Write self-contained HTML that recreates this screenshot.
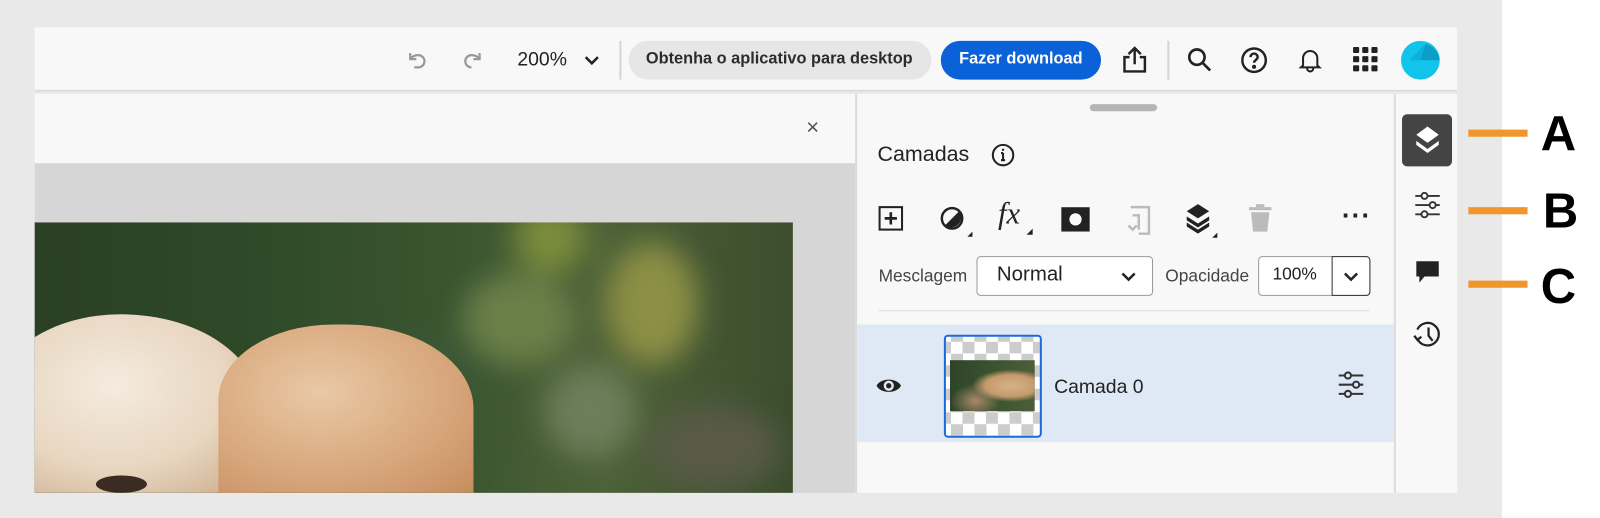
<!DOCTYPE html>
<html><head><meta charset="utf-8"><style>
*{margin:0;padding:0;box-sizing:border-box}
html{width:1600px;height:518px;overflow:hidden}
body{width:1600px;height:518px;background:#fff;font-family:"Liberation Sans",sans-serif;position:relative;overflow:hidden;color:#222}
#w{position:absolute;left:0;top:0;width:1600px;height:518px;overflow:hidden}
#s{position:absolute;left:0;top:0;width:1600px;height:518px;transform:scale(1.0204);transform-origin:0 0}
.abs{position:absolute}
.bg{left:0;top:0;width:1472px;height:518px;background:#e9e9e9}
.top{left:34px;top:27px;width:1394px;height:63px;background:#f8f8f8;border-bottom:2px solid #dcdcdc}
.t{position:absolute;white-space:nowrap}
svg{position:absolute}
</style></head><body><div id="w"><div id="s">
<div class="abs bg"></div>
<div class="abs top"></div>
<svg style="left:396px;top:46px" width="26" height="26" viewBox="0 0 26 26" fill="none" stroke="#999" stroke-width="2.2"><path d="M6 6v6h6M6 12c2-3 5-4 8-4a6 6 0 010 12h-4"/></svg>
<svg style="left:450px;top:46px" width="26" height="26" viewBox="0 0 26 26" fill="none" stroke="#999" stroke-width="2.2"><path d="M20 6v6h-6M20 12c-2-3-5-4-8-4a6 6 0 000 12h-2"/></svg>
<div class="t" style="left:507px;top:48px;font-size:19px;color:#222">200%</div>
<svg style="left:571px;top:52px" width="18" height="14" viewBox="0 0 18 14" fill="none" stroke="#222" stroke-width="2.5"><path d="M3 4l6 6 6-6"/></svg>
<div class="abs" style="left:607px;top:40px;width:2px;height:38px;background:#d5d5d5"></div>
<div class="abs" style="left:616px;top:40px;width:297px;height:38px;border-radius:19px;background:#e6e6e6"></div>
<div class="t" style="left:633px;top:49px;font-size:16px;font-weight:bold;color:#2c2c2c">Obtenha o aplicativo para desktop</div>
<div class="abs" style="left:922px;top:40px;width:157px;height:38px;border-radius:19px;background:#0b61d8"></div>
<div class="t" style="left:940px;top:49px;font-size:16px;font-weight:bold;color:#fff">Fazer download</div>
<svg style="left:1098px;top:44px" width="28" height="30" viewBox="0 0 28 30" fill="none" stroke="#222" stroke-width="2.4"><path d="M9 12H4v14h20V12h-5M14 19V3M8 9l6-6 6 6"/></svg>
<div class="abs" style="left:1144px;top:40px;width:2px;height:38px;background:#d5d5d5"></div>
<svg style="left:1162px;top:45px" width="28" height="28" viewBox="0 0 28 28" fill="none" stroke="#222" stroke-width="2.6"><circle cx="11" cy="11" r="7.5"/><path d="M17 17l7 7"/></svg>
<svg style="left:1215px;top:45px" width="28" height="28" viewBox="0 0 28 28" fill="none" stroke="#222" stroke-width="2.4"><circle cx="14" cy="14" r="11.5"/><path d="M10.5 11a3.5 3.5 0 117 0c0 2.5-3.5 3-3.5 5.5"/><circle cx="14" cy="20.5" r="0.8" fill="#222"/></svg>
<svg style="left:1270px;top:45px" width="28" height="28" viewBox="0 0 28 28" fill="none" stroke="#222" stroke-width="2"><path d="M7 19V12a7 7 0 0114 0v7l2 2H5zM11 22a3 3 0 006 0"/></svg>
<svg style="left:1325px;top:45px" width="26" height="26" viewBox="0 0 26 26" fill="#222"><rect x="1" y="1" width="6" height="6" rx="1"/><rect x="10" y="1" width="6" height="6" rx="1"/><rect x="19" y="1" width="6" height="6" rx="1"/><rect x="1" y="10" width="6" height="6" rx="1"/><rect x="10" y="10" width="6" height="6" rx="1"/><rect x="19" y="10" width="6" height="6" rx="1"/><rect x="1" y="19" width="6" height="6" rx="1"/><rect x="10" y="19" width="6" height="6" rx="1"/><rect x="19" y="19" width="6" height="6" rx="1"/></svg>
<svg style="left:1373px;top:40px" width="38" height="38" viewBox="0 0 38 38"><circle cx="19" cy="19" r="19" fill="#12c3ea"/><path d="M19 19L24 3A19 19 0 0138 19z" fill="#0b9ec6"/><path d="M19 19L24 3 8 19z" fill="#0fb0d8"/></svg>

<div class="abs" style="left:34px;top:92px;width:804px;height:68px;background:#f8f8f8"></div>
<div class="t" style="left:790px;top:112px;font-size:22px;color:#555">×</div>
<div class="abs" style="left:34px;top:160px;width:804px;height:323px;background:#d6d6d6"></div>
<div class="abs" style="left:34px;top:218px;width:743px;height:265px;overflow:hidden;background:linear-gradient(90deg,#2a3f24 0%,#2f4a28 30%,#3b5530 55%,#4d6238 75%,#3b4d2e 100%)">
 <div class="abs" style="left:0;top:0;width:743px;height:265px;filter:blur(14px)">
  <div class="abs" style="left:420px;top:50px;width:110px;height:90px;border-radius:50%;background:#6a8049"></div>
  <div class="abs" style="left:560px;top:20px;width:90px;height:120px;border-radius:50%;background:#8c8f45"></div>
  <div class="abs" style="left:470px;top:-20px;width:70px;height:70px;border-radius:50%;background:#7b8c3c"></div>
  <div class="abs" style="left:600px;top:180px;width:130px;height:80px;border-radius:50%;background:#595a47"></div>
  <div class="abs" style="left:320px;top:110px;width:120px;height:140px;border-radius:50%;background:#3b5736"></div>
  <div class="abs" style="left:500px;top:140px;width:90px;height:90px;border-radius:50%;background:#6d7e5a"></div>
 </div>
 <div class="abs" style="left:-40px;top:90px;width:260px;height:175px;border-radius:48% 52% 0 0;background:radial-gradient(ellipse at 45% 40%,#f4ebdf 0%,#e8d6c0 55%,#c9a887 100%)"></div>
 <div class="abs" style="left:180px;top:100px;width:250px;height:165px;border-radius:45% 50% 0 0;background:radial-gradient(ellipse at 40% 40%,#e9c8a6 0%,#d9a97e 55%,#c68d5f 100%)"></div>
 <div class="abs" style="left:60px;top:248px;width:50px;height:17px;border-radius:50%;background:#3a2c22"></div>
</div>

<div class="abs" style="left:838px;top:92px;width:2px;height:391px;background:#dcdcdc"></div>
<div class="abs" style="left:840px;top:92px;width:526px;height:391px;background:#f8f8f8"></div>
<div class="abs" style="left:1068px;top:102px;width:66px;height:7px;border-radius:4px;background:#b5b5b5"></div>
<div class="t" style="left:860px;top:140px;font-size:21px;color:#222">Camadas</div>
<svg style="left:971px;top:140px" width="24" height="24" viewBox="0 0 24 24" fill="none" stroke="#222" stroke-width="2"><circle cx="12" cy="12" r="10"/><path d="M12 10v7M10 17h4M10 10h2" /><circle cx="12" cy="6.8" r="1.2" fill="#222" stroke="none"/></svg>
<svg style="left:860px;top:201px" width="26" height="26" viewBox="0 0 26 26" fill="none" stroke="#222" stroke-width="2"><rect x="2" y="2" width="22" height="22"/><path d="M13 7v12M7 13h12" stroke-width="2.6"/></svg>
<svg style="left:920px;top:201px" width="36" height="32" viewBox="0 0 36 32"><circle cx="13" cy="13" r="10" fill="none" stroke="#222" stroke-width="2.4"/><path d="M20 6A10 10 0 016 20z" fill="#222"/><path d="M33 26v5h-5z" fill="#222"/></svg>
<div class="t" style="left:978px;top:193px;font-size:30px;font-style:italic;font-family:'Liberation Serif',serif;color:#222">fx</div>
<svg style="left:1004px;top:222px" width="10" height="10"><path d="M8 2v6H2z" fill="#222"/></svg>
<svg style="left:1040px;top:203px" width="28" height="24" viewBox="0 0 28 24"><rect width="28" height="24" fill="#222"/><circle cx="14" cy="12" r="6" fill="#f8f8f8"/></svg>
<svg style="left:1100px;top:201px" width="30" height="30" viewBox="0 0 30 30" fill="none" stroke="#bbb" stroke-width="2.4"><path d="M8 2h18v26H16M10 10h6v14M6 20l4 4 4-4"/></svg>
<svg style="left:1160px;top:199px" width="36" height="36" viewBox="0 0 36 36" fill="#222"><path d="M14 1L25 8 14 15 3 8z"/><path d="M3 13l11 7 11-7v4l-11 7-11-7z"/><path d="M3 19l11 7 11-7v4l-11 7-11-7z"/><path d="M33 29v5h-5z"/></svg>
<svg style="left:1222px;top:200px" width="26" height="28" viewBox="0 0 26 28" fill="#bbb"><rect x="2" y="3" width="22" height="3"/><rect x="9" y="0" width="8" height="3"/><path d="M4 8h18l-2 19H6z"/></svg>
<div class="t" style="left:1315px;top:196px;font-size:26px;font-weight:bold;color:#222;letter-spacing:1px">···</div>
<div class="t" style="left:861px;top:261px;font-size:17px;color:#444">Mesclagem</div>
<div class="abs" style="left:957px;top:251px;width:173px;height:39px;border:1.5px solid #999;border-radius:4px;background:#fff"></div>
<div class="t" style="left:977px;top:258px;font-size:20px;color:#222">Normal</div>
<svg style="left:1097px;top:264px" width="18" height="14" viewBox="0 0 18 14" fill="none" stroke="#222" stroke-width="2.5"><path d="M3 4l6 6 6-6"/></svg>
<div class="t" style="left:1142px;top:261px;font-size:17px;color:#444">Opacidade</div>
<div class="abs" style="left:1233px;top:251px;width:110px;height:39px;border:1.5px solid #999;border-radius:4px;background:#fff"></div>
<div class="abs" style="left:1305px;top:251px;width:38px;height:39px;border:1.5px solid #333;border-radius:0 4px 4px 0;background:#fff"></div>
<div class="t" style="left:1247px;top:259px;font-size:17px;color:#222">100%</div>
<svg style="left:1315px;top:264px" width="18" height="14" viewBox="0 0 18 14" fill="none" stroke="#222" stroke-width="2.5"><path d="M3 4l6 6 6-6"/></svg>
<div class="abs" style="left:861px;top:304px;width:481px;height:1px;background:#ddd"></div>
<div class="abs" style="left:840px;top:318px;width:526px;height:115px;background:#dfe8f5"></div>
<svg style="left:858px;top:367px" width="26" height="22" viewBox="0 0 26 22"><path d="M1 11C5 3 21 3 25 11 21 19 5 19 1 11z" fill="#222"/><circle cx="13" cy="11" r="5" fill="#dfe8f5"/><circle cx="13" cy="11" r="2.6" fill="#222"/></svg>
<div class="abs" style="left:925px;top:328px;width:96px;height:101px;border:2px solid #1a6ad8;border-radius:4px;background-color:#fff;background-image:conic-gradient(#ccc 25%,#fff 0 50%,#ccc 0 75%,#fff 0);background-size:23px 23px;background-position:5px 5px"></div>
<div class="abs" style="left:931px;top:353px;width:83px;height:50px;background:radial-gradient(ellipse at 72% 50%,#d6b28a 0,#c59a6c 30%,transparent 45%),radial-gradient(ellipse at 30% 80%,#a88a6a 0,transparent 30%),linear-gradient(90deg,#2e4428,#3d5532 60%,#4e5e3a)"></div>
<div class="t" style="left:1033px;top:369px;font-size:19px;color:#222">Camada 0</div>
<svg style="left:1310px;top:364px" width="28" height="26" viewBox="0 0 28 26" fill="none" stroke="#333" stroke-width="2"><path d="M2 4h6M14 4h12M2 13h14M22 13h4M2 22h6M14 22h12"/><circle cx="11" cy="4" r="3"/><circle cx="19" cy="13" r="3"/><circle cx="11" cy="22" r="3"/></svg>
<div class="abs" style="left:1366px;top:92px;width:2px;height:391px;background:#dcdcdc"></div>
<div class="abs" style="left:1368px;top:92px;width:60px;height:391px;background:#f8f8f8"></div>
<div class="abs" style="left:1374px;top:112px;width:49px;height:51px;border-radius:5px;background:#444"></div>
<svg style="left:1385px;top:123px" width="28" height="30" viewBox="0 0 28 30" fill="#fff"><path d="M14 1L25 9 14 17 3 9z"/><path d="M3 15l11 8 11-8 0 4-11 8-11-8z"/></svg>
<svg style="left:1385px;top:188px" width="28" height="26" viewBox="0 0 28 26" fill="none" stroke="#333" stroke-width="1.8"><path d="M2 4h6M14 4h12M2 13h14M22 13h4M2 22h6M14 22h12"/><circle cx="11" cy="4" r="3"/><circle cx="19" cy="13" r="3"/><circle cx="11" cy="22" r="3"/></svg>
<svg style="left:1386px;top:253px" width="26" height="26" viewBox="0 0 26 26" fill="#222"><path d="M2 3h22v15H10l-5 6v-6H2z"/></svg>
<svg style="left:1384px;top:313px" width="30" height="30" viewBox="0 0 30 30" fill="none" stroke="#222" stroke-width="2.2"><path d="M5 19A11 11 0 1 0 5 10M2 16l3 4 4-3M16 8v8l4 5"/></svg>
<div class="abs" style="left:1439px;top:127px;width:58px;height:7px;background:#f0962c"></div>
<div class="abs" style="left:1439px;top:203px;width:58px;height:7px;background:#f0962c"></div>
<div class="abs" style="left:1439px;top:275px;width:58px;height:7px;background:#f0962c"></div>
<div class="t" style="left:1510px;top:104px;font-size:48px;font-weight:bold;color:#000">A</div>
<div class="t" style="left:1512px;top:180px;font-size:48px;font-weight:bold;color:#000">B</div>
<div class="t" style="left:1510px;top:254px;font-size:48px;font-weight:bold;color:#000">C</div>
</div></div></body></html>
